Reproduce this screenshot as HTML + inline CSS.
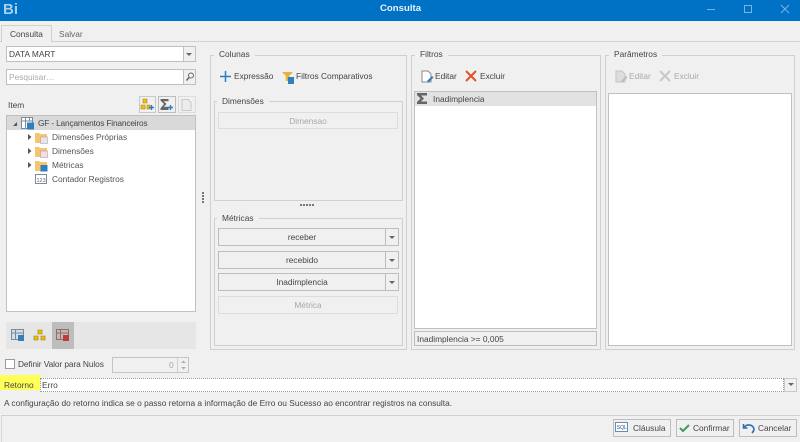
<!DOCTYPE html>
<html><head><meta charset="utf-8"><title>Consulta</title>
<style>
html,body{margin:0;padding:0;width:800px;height:442px;overflow:hidden;background:#f0f0f0}
#w{position:relative;width:800px;height:442px;background:#f0f0f0;font:8.35px "Liberation Sans",sans-serif;color:#444;filter:blur(.3px);overflow:hidden}
.a,.t,svg.a{position:absolute}
.a{box-sizing:border-box}
.t{white-space:nowrap;line-height:12px;height:12px}
.g{border:1px solid #d0d0d0}
.f{background:#fff;border:1px solid #c0c0c0}
.b{background:#f0f0f0;border:1px solid #bdbdbd;text-align:center;line-height:16px}
.d{border-color:#dcdcdc;color:#a8a8a8}
.lg{background:#f0f0f0;padding:0 5px}
.arr{width:0;height:0;border-left:3px solid transparent;border-right:3px solid transparent;border-top:3px solid #666;position:absolute}
</style></head><body><div id="w">
<div class="a" style="left:0;top:0;width:800px;height:21px;background:#0072c6"></div>
<div class="t" style="left:3px;top:2px;font:bold 15px/16px 'Liberation Sans',sans-serif;height:16px;color:#a9cfec">Bi</div>
<div class="t" style="left:380px;top:3px;font:bold 9.6px/12px 'Liberation Sans',sans-serif;color:#e8f2fa">Consulta</div>
<svg class="a" style="left:700px;top:0" width="100" height="21" fill="none" stroke="#7ab3e0"><path d="M7 9.500h8"/><rect x="44.500" y="5.500" width="7" height="7"/><path d="M81 5l8 8M89 5l-8 8"/></svg>

<div class="a" style="left:0;top:41px;width:800px;height:1px;background:#d0d0d0"></div>
<div class="a" style="left:1px;top:25px;width:51px;height:17px;background:#f0f0f0;border:1px solid #d0d0d0;border-bottom:none"></div>
<div class="t" style="left:10px;top:28px">Consulta</div>
<div class="t" style="left:59px;top:28px;color:#666">Salvar</div>

<div class="a f" style="left:6px;top:46px;width:190px;height:16px"></div>
<div class="a" style="left:183px;top:46px;width:13px;height:16px;border:1px solid #c0c0c0;background:#f0f0f0"></div>
<div class="arr" style="left:186px;top:53px"></div>
<div class="t" style="left:9px;top:48px">DATA MART</div>
<div class="a f" style="left:6px;top:69px;width:190px;height:16px"></div>
<div class="a" style="left:183px;top:69px;width:13px;height:16px;border:1px solid #c0c0c0;background:#f0f0f0"></div>
<svg class="a" style="left:184px;top:71px" width="12" height="12" fill="none" stroke="#666"><circle cx="7" cy="4.500" r="2.500"/><path d="M5 6.500L2.500 9.500" stroke-width="1.500"/></svg>
<div class="t" style="left:9px;top:71px;color:#aaa">Pesquisar…</div>

<div class="t" style="left:8px;top:99px">Item</div>
<div class="a" style="left:139px;top:96px;width:17px;height:17px;border:1px solid #c8c8c8"></div>
<div class="a" style="left:158px;top:96px;width:18px;height:17px;border:1px solid #bdbdbd"></div>
<div class="a" style="left:178px;top:96px;width:18px;height:17px;border:1px solid #dcdcdc"></div>
<svg class="a" style="left:139px;top:96px" width="58" height="17" fill="none"><path d="M4 3h4v4H4zM2 9h4v4H2zM8 9h3v4H8z" fill="#f2c200" stroke="#9a8420" stroke-width=".6"/><path d="M10 11.500h5M12.500 9v5" stroke="#2b7cc4" stroke-width="1.400"/><path d="M21.500 3h8v2.200h-4.800L27.500 8l-2.800 2.800h4.800V14h-8v-1.800L25 8l-3.500-3.500z" fill="#666"/><path d="M29 11.500h5M31.500 9v5" stroke="#2b7cc4" stroke-width="1.400"/><path d="M43 3.500h6l3 3v8h-9z" fill="#ececec" stroke="#c8c8c8"/></svg>

<div class="a f" style="left:6px;top:115px;width:190px;height:197px"></div>
<div class="a" style="left:7px;top:116px;width:188px;height:14px;background:#d9d9d9"></div>
<svg class="a" style="left:10px;top:117px" width="40" height="70"><path d="M3 9l4-4v4z" fill="#555"/><path d="M18 17l3.500 3-3.500 3zM18 31l3.500 3-3.500 3zM18 45l3.500 3-3.500 3z" fill="#555"/></svg>
<svg class="a" style="left:20px;top:116px" width="18" height="15"><rect x="1.500" y="1.500" width="11" height="11" fill="#fff" stroke="#7b8b99"/><path d="M1.500 5h11M5.500 2v11M9.500 2v3" stroke="#7b8b99"/><rect x="7" y="6.500" width="7" height="7" fill="#2f7fc1"/></svg>
<svg class="a" style="left:35px;top:131px" width="15" height="56"><g><path d="M0 2h4l1 1h7v9H0z" fill="#f5c66c"/><rect x="5.500" y="6" width="7" height="6.500" fill="#e8e4ea" stroke="#9a9ab0" stroke-width=".5"/></g><g transform="translate(0 14)"><path d="M0 2h4l1 1h7v9H0z" fill="#f5c66c"/><rect x="5.500" y="6" width="7" height="6.500" fill="#f0e0e6" stroke="#b08aa0" stroke-width=".5"/></g><g transform="translate(0 28)"><path d="M0 2h4l1 1h7v9H0z" fill="#f5c66c"/><rect x="5.500" y="6" width="7" height="6.500" fill="#2f7fc1"/></g><rect x=".5" y="43.500" width="11" height="9" fill="#fff" stroke="#7b8b99"/><text x="1.500" y="51" font-family="Liberation Sans" font-size="5.500" fill="#667">123</text></svg>
<div class="t" style="left:38px;top:117px;letter-spacing:-.18px">GF - Lançamentos Financeiros</div>
<div class="t" style="left:52px;top:131px;color:#555">Dimensões Próprias</div>
<div class="t" style="left:52px;top:145px;color:#555">Dimensões</div>
<div class="t" style="left:52px;top:159px;color:#555">Métricas</div>
<div class="t" style="left:52px;top:173px;color:#555">Contador Registros</div>

<div class="a" style="left:6px;top:322px;width:190px;height:27px;background:#e6e6e6"></div>
<div class="a" style="left:52px;top:322px;width:22px;height:27px;background:#bdbdbd"></div>
<svg class="a" style="left:6px;top:321px" width="70" height="29" fill="none"><rect x="5.500" y="8.500" width="12" height="10" fill="#d5dde5" stroke="#7b8b99"/><path d="M5.500 12h12M9.500 9v10" stroke="#7b8b99"/><rect x="12" y="14" width="6" height="6" fill="#2f7fc1"/><path d="M32 9h4v4h-4zM28 15h4v4h-4zM35 15h4v4h-4z" fill="#f2c200" stroke="#8a7a20" stroke-width=".6"/><rect x="50.500" y="8.500" width="12" height="10" fill="#c9b5b5" stroke="#8a6f6f"/><path d="M50.500 12h12M54.500 9v10" stroke="#8a6f6f"/><rect x="57" y="14" width="6" height="6" fill="#c0393b"/></svg>

<div class="a" style="left:5px;top:359px;width:10px;height:10px;background:#fff;border:1px solid #9a9a9a"></div>
<div class="t" style="left:18px;top:358px;letter-spacing:-.09px">Definir Valor para Nulos</div>
<div class="a" style="left:112px;top:357px;width:77px;height:16px;border:1px solid #c4c4c4"></div>
<div class="a" style="left:177px;top:358px;width:1px;height:14px;background:#d0d0d0"></div>
<div class="t" style="left:169px;top:359px;color:#aaa">0</div>
<svg class="a" style="left:179px;top:359px" width="9" height="12"><path d="M2 4l2.500-2.500L7 4zM2 8l2.500 2.500L7 8z" fill="#b0b0b0"/></svg>

<div class="a" style="left:0;top:375px;width:41px;height:15px;background:#ffff55"></div>
<div class="t" style="left:4px;top:379px">Retorno</div>
<div class="a" style="left:40px;top:378px;width:744px;height:14px;background:#fff;border:1px dotted #999"></div>
<div class="t" style="left:42px;top:379px">Erro</div>
<div class="a" style="left:784px;top:378px;width:13px;height:14px;border:1px solid #c8c8c8;background:#f0f0f0"></div>
<div class="arr" style="left:788px;top:383px"></div>
<div class="t" style="left:4px;top:397px">A configuração do retorno indica se o passo retorna a informação de Erro ou Sucesso ao encontrar registros na consulta.</div>

<div class="a" style="left:1px;top:415px;width:799px;height:27px;border-top:1px solid #d0d0d0;border-left:1px solid #d8d8d8"></div>

<div class="a g" style="left:210px;top:55px;width:197px;height:295px"></div>
<div class="t lg" style="left:214px;top:48px">Colunas</div>
<svg class="a" style="left:219px;top:70px" width="80" height="15"><path d="M1 6.500h11M6.500 1v11" stroke="#2b7cc4" stroke-width="1.500"/><path d="M63 2h11l-3.800 4v5h-3.400V6z" fill="#e8b13a"/><rect x="69" y="7" width="6" height="7" fill="#2f7fc1"/></svg>
<div class="t" style="left:234px;top:70px">Expressão</div>
<div class="t" style="left:296px;top:70px">Filtros Comparativos</div>

<div class="a g" style="left:214px;top:101px;width:189px;height:100px"></div>
<div class="t lg" style="left:217px;top:95px">Dimensões</div>
<div class="a b d" style="left:218px;top:112px;width:180px;height:17px">Dimensao</div>
<div class="a" style="left:300px;top:204px;width:15px;height:2px;background:repeating-linear-gradient(90deg,#777 0 2px,transparent 2px 3px)"></div>

<div class="a g" style="left:214px;top:218px;width:189px;height:128px"></div>
<div class="t lg" style="left:217px;top:212px">Métricas</div>
<div class="a b" style="left:218px;top:228px;width:181px;height:18px;padding-right:13px">receber</div>
<div class="a" style="left:385px;top:228px;width:1px;height:18px;background:#bdbdbd"></div><div class="arr" style="left:389px;top:236px"></div>
<div class="a b" style="left:218px;top:251px;width:181px;height:18px;padding-right:13px">recebido</div>
<div class="a" style="left:385px;top:251px;width:1px;height:18px;background:#bdbdbd"></div><div class="arr" style="left:389px;top:259px"></div>
<div class="a b" style="left:218px;top:273px;width:181px;height:18px;padding-right:13px">Inadimplencia</div>
<div class="a" style="left:385px;top:273px;width:1px;height:18px;background:#bdbdbd"></div><div class="arr" style="left:389px;top:281px"></div>
<div class="a b d" style="left:218px;top:296px;width:180px;height:18px">Métrica</div>

<div class="a" style="left:202px;top:192px;width:2px;height:12px;background:repeating-linear-gradient(#777 0 2px,transparent 2px 3px)"></div>

<div class="a g" style="left:411px;top:55px;width:190px;height:295px"></div>
<div class="t lg" style="left:415px;top:48px">Filtros</div>
<svg class="a" style="left:420px;top:69px" width="60" height="15" fill="none"><path d="M2 2h6l3 3v8H2z" fill="#fff" stroke="#888"/><path d="M7 12l5-5 1.500 1.500-5 5z" fill="#2b7cc4"/><path d="M46 2l10 10M56 2L46 12" stroke="#e2502a" stroke-width="2"/></svg>
<div class="t" style="left:435px;top:70px">Editar</div>
<div class="t" style="left:480px;top:70px">Excluir</div>
<div class="a f" style="left:414px;top:91px;width:183px;height:238px"></div>
<div class="a" style="left:415px;top:92px;width:181px;height:14px;background:#e2e2e2"></div>
<svg class="a" style="left:416px;top:92px" width="13" height="13"><path d="M1 1h10v2.500H5L8 6.500 5 9.500h6V12H1v-2l3.500-3.500L1 3z" fill="#666"/></svg>
<div class="t" style="left:433px;top:93px">Inadimplencia</div>
<div class="a" style="left:414px;top:331px;width:183px;height:15px;border:1px solid #bdbdbd"></div>
<div class="t" style="left:417px;top:333px">Inadimplencia &gt;= 0,005</div>

<div class="a g" style="left:605px;top:55px;width:190px;height:295px"></div>
<div class="t lg" style="left:609px;top:48px">Parâmetros</div>
<svg class="a" style="left:614px;top:69px" width="60" height="15" fill="none"><path d="M2 2h6l3 3v8H2z" fill="#ddd" stroke="#c4c4c4"/><path d="M7 12l5-5 1.500 1.500-5 5z" fill="#bbb"/><path d="M46 2l10 10M56 2L46 12" stroke="#c8c8c8" stroke-width="2"/></svg>
<div class="t" style="left:629px;top:70px;color:#aaa">Editar</div>
<div class="t" style="left:674px;top:70px;color:#aaa">Excluir</div>
<div class="a f" style="left:608px;top:93px;width:184px;height:253px"></div>

<div class="a b" style="left:613px;top:419px;width:58px;height:18px"></div>
<div class="a b" style="left:676px;top:419px;width:58px;height:18px"></div>
<div class="a b" style="left:739px;top:419px;width:58px;height:18px"></div>
<svg class="a" style="left:613px;top:419px" width="184" height="18" fill="none"><rect x="2.500" y="3.500" width="12" height="9" fill="#fff" stroke="#5b8fbd"/><text x="3.800" y="10" font-family="Liberation Sans" font-size="5" fill="#446">SQL</text><path d="M67 9l3 3 6-6" stroke="#3f9a5b" stroke-width="2"/><path d="M130.500 5v4h4M131 8.500c3-4 9-3 10 1.500 0 2-1 3-2 4" stroke="#2b6fb0" stroke-width="1.600"/></svg>
<div class="t" style="left:633px;top:422px">Cláusula</div>
<div class="t" style="left:693px;top:422px">Confirmar</div>
<div class="t" style="left:758px;top:422px">Cancelar</div>
</div></body></html>
